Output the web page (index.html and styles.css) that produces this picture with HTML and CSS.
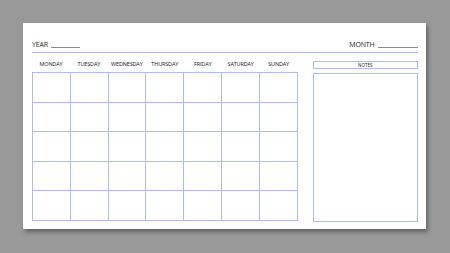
FILE: index.html
```html
<!DOCTYPE html>
<html>
<head>
<meta charset="utf-8">
<link rel="stylesheet" href="styles.css">
</head>
<body>
<div class="paper">
  <div class="header">
    <div class="field">YEAR <span class="blank year-blank"></span></div>
    <div class="field">MONTH <span class="blank month-blank"></span></div>
  </div>
  <div class="main">
    <div class="calendar">
      <div class="days">
        <div class="day">MONDAY</div>
        <div class="day">TUESDAY</div>
        <div class="day">WEDNESDAY</div>
        <div class="day">THURSDAY</div>
        <div class="day">FRIDAY</div>
        <div class="day">SATURDAY</div>
        <div class="day">SUNDAY</div>
      </div>
      <div class="grid">
        <div class="cell"></div><div class="cell"></div><div class="cell"></div><div class="cell"></div><div class="cell"></div><div class="cell"></div><div class="cell"></div>
        <div class="cell"></div><div class="cell"></div><div class="cell"></div><div class="cell"></div><div class="cell"></div><div class="cell"></div><div class="cell"></div>
        <div class="cell"></div><div class="cell"></div><div class="cell"></div><div class="cell"></div><div class="cell"></div><div class="cell"></div><div class="cell"></div>
        <div class="cell"></div><div class="cell"></div><div class="cell"></div><div class="cell"></div><div class="cell"></div><div class="cell"></div><div class="cell"></div>
        <div class="cell"></div><div class="cell"></div><div class="cell"></div><div class="cell"></div><div class="cell"></div><div class="cell"></div><div class="cell"></div>
      </div>
    </div>
    <div class="notes">
      <div class="notes-title">NOTES</div>
      <div class="notes-body"></div>
    </div>
  </div>
</div>
</body>
</html>
```

FILE: styles.css
```css
* { box-sizing: border-box; }
html, body { margin: 0; padding: 0; }
body {
  background: #999999;
  width: 450px;
  height: 253px;
  overflow: hidden;
  font-family: "Open Sans", "Liberation Sans", sans-serif;
  color: #1e1e1e;
}
.paper {
  margin: 23px 0 0 23px;
  width: 403px;
  height: 206px;
  background: #fff;
  box-shadow: 2px 3px 4px rgba(0,0,0,0.35);
  padding: 0 8px 0 9px;
}
.header {
  height: 30px;
  display: flex;
  justify-content: space-between;
  align-items: flex-end;
  border-bottom: 1px solid #a9b8f2;
  padding-bottom: 3px;
}
.field {
  font-size: 7px;
  line-height: 8px;
  letter-spacing: -0.2px;
  display: flex;
  align-items: flex-end;
  white-space: pre;
}
.blank {
  display: inline-block;
  border-bottom: 1px solid #8a8a8a;
  height: 2px;
  margin-bottom: 1px;
}
.year-blank { width: 29px; margin-left: 2px; }
.month-blank { width: 40px; margin-left: 2px; }
.main {
  display: flex;
  gap: 15px;
}
.calendar { width: 267px; }
.days {
  display: grid;
  grid-template-columns: repeat(7, 1fr);
  height: 19px;
  align-items: center;
  padding-top: 2px;
}
.day {
  font-size: 5.5px;
  text-align: center;
  letter-spacing: -0.15px;
  color: #1a1a1a;
}
.grid {
  display: grid;
  grid-template-columns: repeat(7, 1fr);
  grid-template-rows: repeat(5, 1fr);
  gap: 1px;
  padding: 1px;
  background: #aebbf4;
  height: 149px;
}
.cell { background: #fff; }
.notes {
  width: 106px;
  display: flex;
  flex-direction: column;
}
.notes-title {
  margin-top: 8px;
  height: 8px;
  border: 1px solid #aebbf4;
  font-size: 4.5px;
  line-height: 6px;
  text-align: center;
  color: #1a1a1a;
}
.notes-body {
  margin-top: 4px;
  height: 149px;
  border: 1px solid #aebbf4;
}
```
